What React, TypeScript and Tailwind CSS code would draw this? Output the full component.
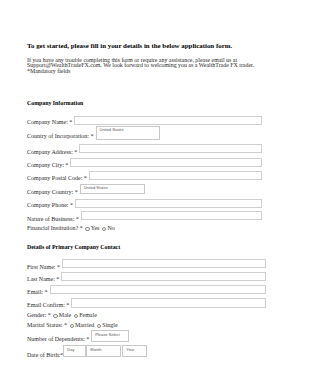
const serif = { fontFamily: '"Liberation Serif", "Times New Roman", serif' };
const sans = { fontFamily: '"Liberation Sans", Arial, sans-serif' };

type Field = {
  label: string;
  row: string;
  labelCls: string;
  kind: "input" | "select";
  ctrl: string;
  text?: string;
};

const companyFields: Field[] = [
  { label: "Company Name: *", row: "h-[10px]", labelCls: "mt-[3px]", kind: "input", ctrl: "flex-1 h-[9px]" },
  { label: "Country of Incorporation: *", row: "h-[18px]", labelCls: "mt-[7px]", kind: "select", ctrl: "w-[64px] h-[14px]", text: "United States" },
  { label: "Company Address: *", row: "h-[14px]", labelCls: "mt-[5px]", kind: "input", ctrl: "flex-1 h-[9px]" },
  { label: "Company City: *", row: "h-[12.7px]", labelCls: "mt-[4px]", kind: "input", ctrl: "flex-1 h-[9px]" },
  { label: "Company Postal Code: *", row: "h-[12.6px]", labelCls: "mt-[4px]", kind: "input", ctrl: "flex-1 h-[9px]" },
  { label: "Company Country: *", row: "h-[15px]", labelCls: "mt-[5.5px]", kind: "select", ctrl: "w-[65px] h-[10px]", text: "United States" },
  { label: "Company Phone: *", row: "h-[12.7px]", labelCls: "mt-[3.5px]", kind: "input", ctrl: "flex-1 h-[9px]" },
  { label: "Nature of Business: *", row: "h-[13.7px]", labelCls: "mt-[4.3px]", kind: "input", ctrl: "flex-1 h-[9px]" },
];

const contactFields: Field[] = [
  { label: "First Name: *", row: "h-[13px]", labelCls: "mt-[4.4px]", kind: "input", ctrl: "flex-1 h-[9px]" },
  { label: "Last Name: *", row: "h-[13px]", labelCls: "mt-[4px]", kind: "input", ctrl: "flex-1 h-[9px]" },
  { label: "Email: *", row: "h-[13px]", labelCls: "mt-[3.7px]", kind: "input", ctrl: "flex-1 h-[9px]" },
  { label: "Email Confirm: *", row: "h-[14px]", labelCls: "mt-[4px]", kind: "input", ctrl: "flex-1 h-[9.5px]" },
];

function Control({ f }: { f: Field }) {
  if (f.kind === "select") {
    return (
      <div className={`${f.ctrl} ml-[2px] border border-[#c8c8c8] bg-white`}>
        <div className="whitespace-nowrap pl-[3px] pt-[1px] text-[4px] leading-[4px] text-[#555]" style={sans}>
          {f.text}
        </div>
      </div>
    );
  }
  return <div className={`${f.ctrl} ml-[2px] border border-[#cfcfcf] bg-white`} />;
}

function FieldRow({ f }: { f: Field }) {
  return (
    <div className={`flex items-start ${f.row}`}>
      <span className={`${f.labelCls} whitespace-nowrap text-[6px] leading-[6px]`}>{f.label}</span>
      <Control f={f} />
    </div>
  );
}

function Radio() {
  return (
    <span className="mx-[1px] inline-block h-[4.5px] w-[4.5px] rounded-full border border-[#888] bg-white align-middle" />
  );
}

function SmallSelect({ w, text }: { w: string; text: string }) {
  return (
    <div className={`${w} h-[12px] border border-[#c8c8c8] bg-white`}>
      <div className="whitespace-nowrap pl-[3px] pt-[1.5px] text-[4px] leading-[4px] text-[#555]" style={sans}>
        {text}
      </div>
    </div>
  );
}

export default function App() {
  return (
    <div className="h-[386px] w-[298px] overflow-hidden bg-white text-[#2a2a2a]" style={serif}>
      <div className="pl-[27px] pt-[41.5px]">
        <h1 className="whitespace-nowrap text-[6.9px] font-bold leading-[8px] text-black">
          To get started, please fill in your details in the below application form.
        </h1>
        <p className="mt-[8.5px] whitespace-nowrap text-[5.9px] leading-[5.3px]">
          If you have any trouble completing this form or require any assistance, please email us at
          <br />
          Support@WealthTradeFX.com. We look forward to welcoming you as a WealthTrade FX trader.
        </p>
        <p className="mt-[0.6px] text-[5.9px] leading-[5.3px]">*Mandatory fields</p>

        <h2 className="mt-[26px] text-[5.85px] font-bold leading-[6px] text-black">Company Information</h2>

        <div className="mt-[10px] w-[235px]">
          {companyFields.map((f) => (
            <FieldRow key={f.label} f={f} />
          ))}
          <div className="h-[19px] text-[6px] leading-[6px]">
            Financial Institution? * <Radio />Yes <Radio />No
          </div>
        </div>

        <h2 className="text-[5.85px] font-bold leading-[6px] text-black">Details of Primary Company Contact</h2>

        <div className="mt-[9px] w-[239px]">
          {contactFields.map((f) => (
            <FieldRow key={f.label} f={f} />
          ))}
          <div className="h-[10px] text-[6px] leading-[6px]">
            Gender: * <Radio />Male <Radio />Female
          </div>
          <div className="h-[8px] text-[6px] leading-[6px]">
            Marital Status: * <Radio />Married <Radio />Single
          </div>
          <div className="flex h-[15px] items-start">
            <span className="mt-[6.3px] whitespace-nowrap text-[6px] leading-[6px]">Number of Dependents: *</span>
            <div className="ml-[2px]">
              <SmallSelect w="w-[38px]" text="Please Select" />
            </div>
          </div>
          <div className="flex h-[12px] items-start">
            <span className="mt-[6.4px] whitespace-nowrap text-[6px] leading-[6px]">Date of Birth:*</span>
            <div className="flex">
              <SmallSelect w="w-[23px]" text="Day" />
              <SmallSelect w="w-[35px]" text="Month" />
              <div className="ml-[1px]">
                <SmallSelect w="w-[25px]" text="Year" />
              </div>
            </div>
          </div>
        </div>
      </div>
    </div>
  );
}
